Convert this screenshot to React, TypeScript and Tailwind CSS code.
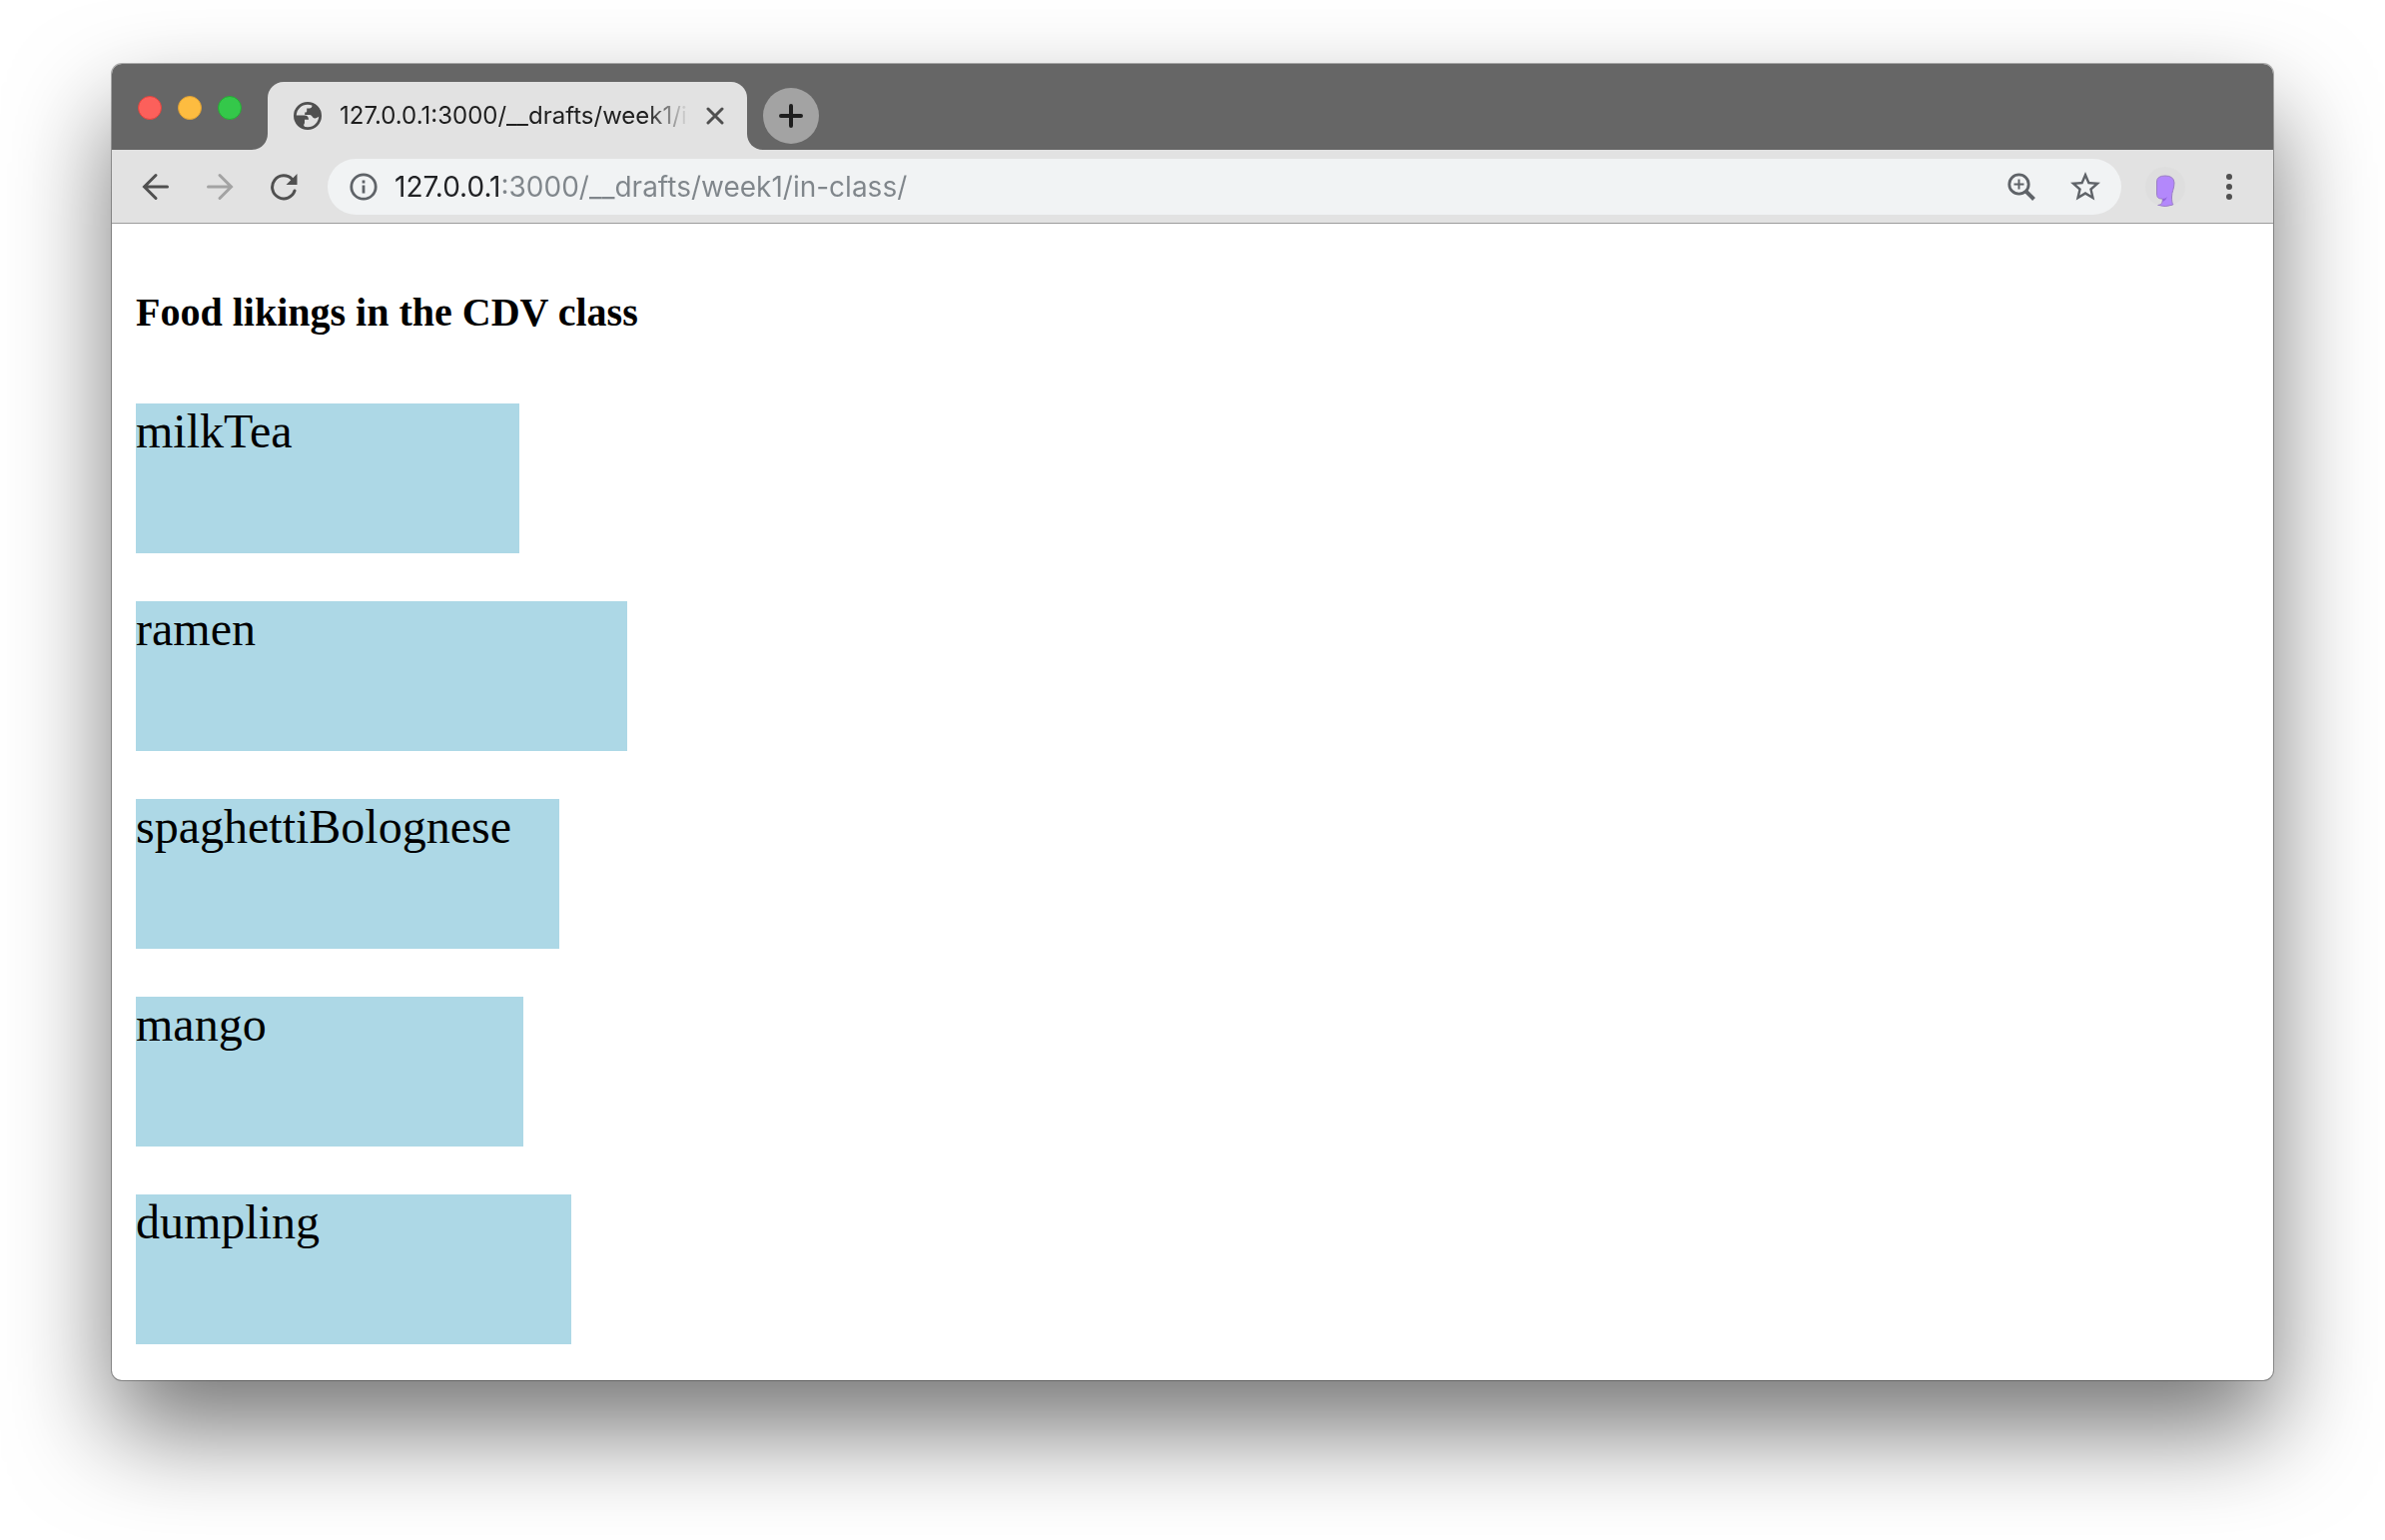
const foods = [
  { name: 'milkTea', width: 384 },
  { name: 'ramen', width: 492 },
  { name: 'spaghettiBolognese', width: 424 },
  { name: 'mango', width: 388 },
  { name: 'dumpling', width: 436 },
];

function Globe() {
  return (
    <svg viewBox="0 0 28 28" className="size-7 shrink-0" aria-hidden="true">
      <circle cx="14" cy="14" r="12.6" fill="none" stroke="#505050" strokeWidth="2.8" />
      <path
        fill="#505050"
        d="M18.500 1.500v2.300c0 1.500-1.200 2.700-2.700 2.700h-2.600v2.800c0 .8-.6 1.300-1.300 1.300h-.7v2.400h5c1.300 0 2 1 2.600 2 .7 1.200 1.900 1.800 3.400 1.300 2-.6 3.200-2 5-2.300C27.200 7.500 24 3 18.500 1.500zM1.500 13.500h9.200c2.900 0 4.300 1.500 4.300 4.200h-4v3c0 1-.4 1.800-1 2.300l1.500 3.500C5 25.500 1 20 1.500 13.500z"
      />
    </svg>
  );
}

function TabBar() {
  return (
    <div className="flex h-[86px] items-end bg-[#666666] pl-[26px]">
      <div className="mb-[30px] flex gap-4">
        <button aria-label="Close window" className="size-6 rounded-full border border-[#e0443e] bg-[#fc605b]" />
        <button aria-label="Minimize window" className="size-6 rounded-full border border-[#dea034] bg-[#fdbc40]" />
        <button aria-label="Zoom window" className="size-6 rounded-full border border-[#27a935] bg-[#34c84a]" />
      </div>
      <Flare className="ml-2.5" d="M16 0v16H0C9 16 16 9 16 0z" />
      <div className="flex h-[68px] w-[480px] items-center rounded-t-2xl bg-[#e2e2e2] pr-5 pl-[26px]">
        <Globe />
        <span className="ml-[18px] w-[350px] overflow-hidden bg-linear-to-r from-[#1e1e1e] from-88% to-transparent bg-clip-text font-[Inter,sans-serif] text-2xl whitespace-nowrap text-transparent">
          127.0.0.1:3000/__drafts/week1/in-class/
        </span>
        <button aria-label="Close tab" className="ml-auto grid size-6 place-items-center">
          <svg viewBox="0 0 18 18" className="size-[18px]" fill="none" stroke="#505050" strokeWidth="3" strokeLinecap="round">
            <path d="M2 2l14 14M16 2L2 16" />
          </svg>
        </button>
      </div>
      <Flare d="M0 0v16h16C7 16 0 9 0 0z" />
      <button aria-label="New tab" className="mb-1.5 grid size-14 place-items-center rounded-full bg-[#a3a3a3]">
        <svg viewBox="0 0 24 24" className="size-6" fill="none" stroke="#1e1e1e" strokeWidth="4" strokeLinecap="round">
          <path d="M12 2v20M2 12h20" />
        </svg>
      </button>
    </div>
  );
}

function Flare({ d, className = '' }: { d: string; className?: string }) {
  return (
    <svg viewBox="0 0 16 16" className={'size-4 shrink-0 ' + className} fill="#e2e2e2" aria-hidden="true">
      <path d={d} />
    </svg>
  );
}

function Toolbar() {
  return (
    <div className="flex h-[74px] items-center border-b border-[#9c9c9c] bg-[#e2e2e2] pr-7 pl-[26px]">
      <div className="flex gap-7">
        <button aria-label="Back" className="grid size-9 place-items-center">
          <svg viewBox="0 0 28 28" className="size-7" fill="none" stroke="#505050" strokeWidth="3" strokeLinecap="round">
            <path d="M25.500 14H3M14 2.500L2.500 14 14 25.500" />
          </svg>
        </button>
        <button aria-label="Forward" disabled className="grid size-9 place-items-center">
          <svg viewBox="0 0 28 28" className="size-7" fill="none" stroke="#a3a3a3" strokeWidth="3" strokeLinecap="round">
            <path d="M2.500 14h22M14 2.500L25.500 14 14 25.500" />
          </svg>
        </button>
        <button aria-label="Reload" className="grid size-9 place-items-center">
          <svg viewBox="0 0 28 28" className="size-7" fill="none" stroke="#505050" strokeWidth="3">
            <path d="M22.500 6.500A11.500 11.500 0 1 0 25 18" strokeLinecap="round" />
            <path d="M27.500 1v11h-11z" fill="#505050" stroke="none" />
          </svg>
        </button>
      </div>
      <div className="ml-[26px] flex h-14 min-w-0 flex-1 items-center rounded-full bg-[#f1f3f4] pr-[21px] pl-[22px]">
        <button aria-label="Site information" className="shrink-0">
          <svg viewBox="0 0 28 28" className="size-7" fill="none" stroke="#5f6368" strokeWidth="2.800">
            <circle cx="14" cy="14" r="12.200" />
            <path d="M14 7.500v3M14 12.500v8" />
          </svg>
        </button>
        <input
          aria-label="Address"
          readOnly
          defaultValue="127.0.0.1:3000/__drafts/week1/in-class/"
          className="ml-[17px] min-w-0 flex-1 bg-linear-to-r from-[#202124] from-[108px] to-[#80868b] to-[108px] bg-clip-text font-[Inter,sans-serif] text-[28px] text-transparent outline-none"
        />
        <button aria-label="Zoom in">
          <svg viewBox="0 0 28 28" className="size-7" fill="none" stroke="#5f6368">
            <circle cx="11.500" cy="11.500" r="9.700" strokeWidth="2.800" />
            <path d="M18.500 18.500l8 8" strokeWidth="4" />
            <path d="M11.500 6.500v10M6.500 11.500h10" strokeWidth="2" />
          </svg>
        </button>
        <button aria-label="Bookmark this page" className="ml-[35px]">
          <svg viewBox="2 2 20 20" className="size-[30px]" fill="#5f6368">
            <path d="M22 9.240l-7.190-.62L12 2 9.190 8.630 2 9.240l5.460 4.730L5.820 21 12 17.270 18.180 21l-1.630-7.030L22 9.240zM12 15.400l-3.760 2.270 1-4.280-3.320-2.880 4.380-.38L12 6.100l1.710 4.040 4.380.38-3.320 2.880 1 4.280L12 15.400z" />
          </svg>
        </button>
      </div>
      <button aria-label="Profile" className="ml-6 size-10 overflow-hidden rounded-full bg-[#dedede]">
        <svg viewBox="0 0 40 40" className="size-10">
          <path
            d="M11.500 15Q11.500 9 20 9T29 16C29 22 26.500 25 26.500 30c0 4 .3 6.500 1.500 8Q20 41 12.500 38.500c3-.5 5-1.500 4.800-6.500-4.500 0-5.500-1-5.800-5z"
            fill="#b388fb"
            stroke="#9b7fc4"
          />
          <path d="M17.500 32q3-.2 4.500-2-1 3.500-4.500 5z" fill="#8f63dc" />
        </svg>
      </button>
      <button aria-label="Menu" className="ml-7 grid size-8 place-items-center">
        <svg viewBox="0 0 6 26" className="h-[26px] w-1.5" fill="#505050">
          <circle cx="3" cy="3" r="3" />
          <circle cx="3" cy="13" r="3" />
          <circle cx="3" cy="23" r="3" />
        </svg>
      </button>
    </div>
  );
}

export default function App() {
  return (
    <div className="min-h-screen bg-white px-28 pt-16 pb-40">
      <div className="overflow-hidden rounded-[10px] bg-white shadow-[0_0_0_1px_rgba(0,0,0,0.3),0_50px_100px_rgba(0,0,0,0.54)]">
        <TabBar />
        <Toolbar />
        <main className="px-6 pt-[66px] pb-9 font-['Liberation_Serif',serif] text-black">
          <h1 className="text-[40px] leading-[46px] font-bold">Food likings in the CDV class</h1>
          <div className="mt-[68px] flex flex-col gap-12">
            {foods.map((food) => (
              <div key={food.name} className="h-[150px] bg-[#add8e6] text-5xl leading-[56px]" style={{ width: food.width }}>
                {food.name}
              </div>
            ))}
          </div>
        </main>
      </div>
    </div>
  );
}
